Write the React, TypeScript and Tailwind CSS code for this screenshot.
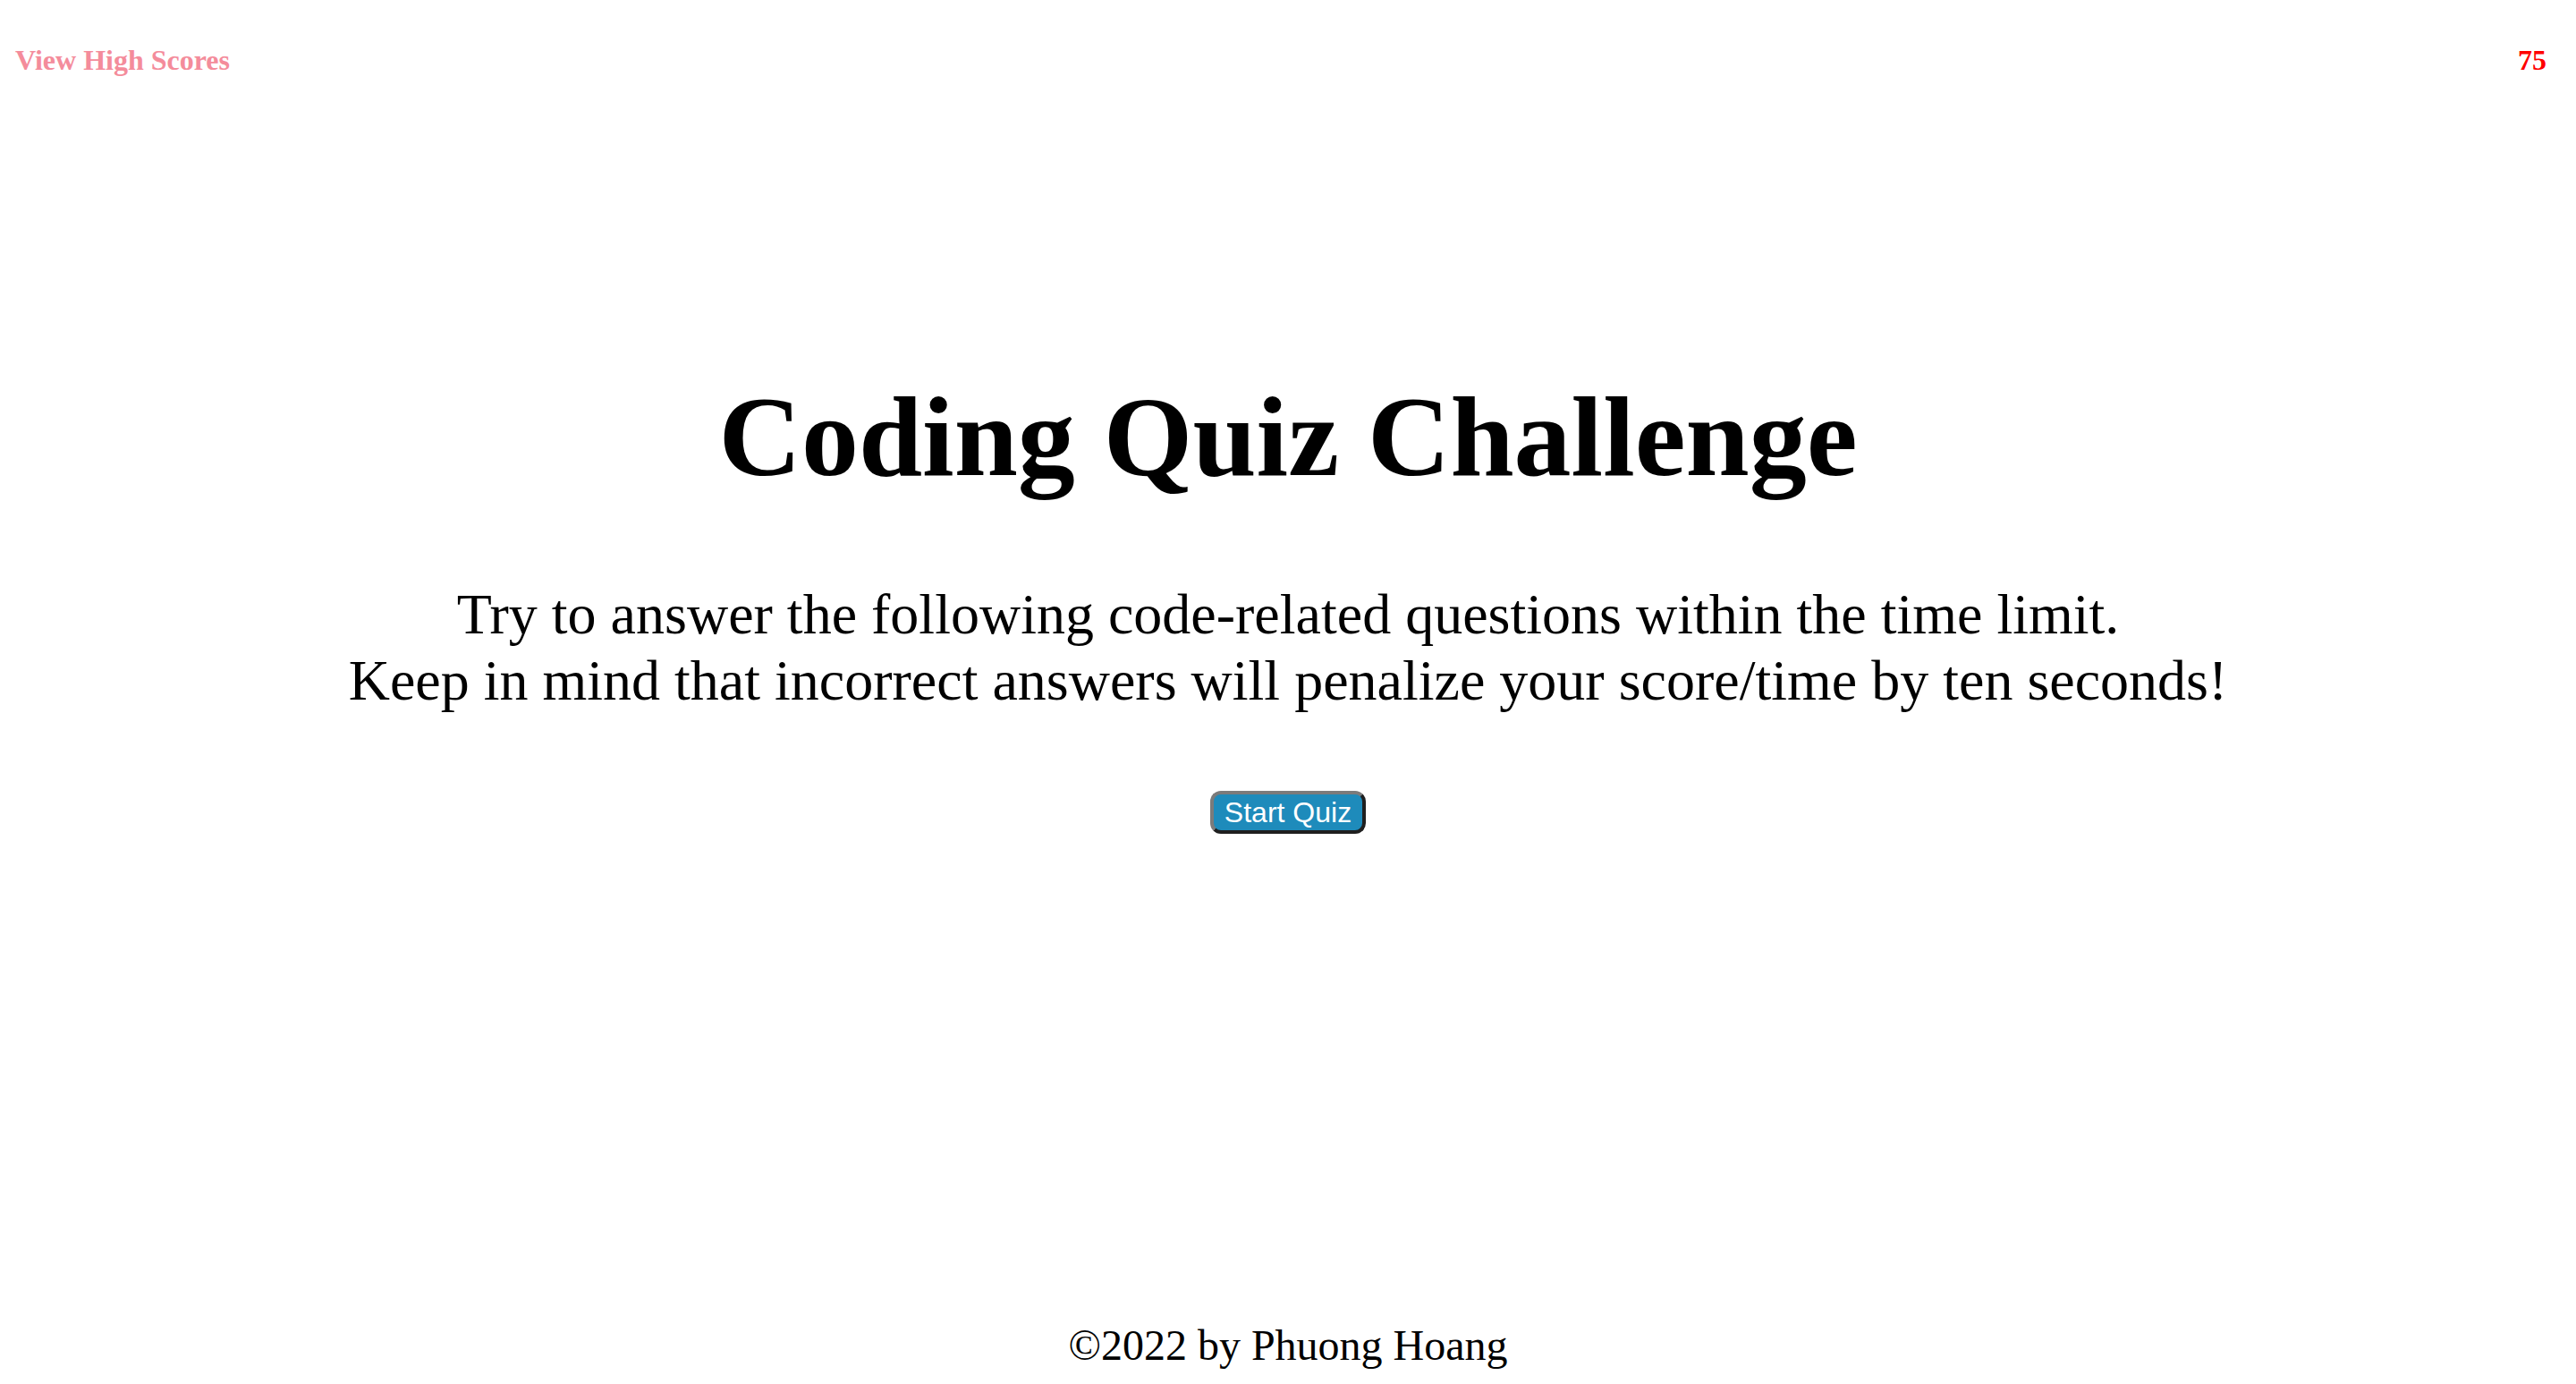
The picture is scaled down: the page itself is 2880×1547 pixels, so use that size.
export default function App() {
  return (
    <div className="min-h-screen flex flex-col bg-white text-black font-['Liberation_Serif','Times_New_Roman',serif]">
      {/* Top bar */}
      <header className="flex items-center justify-between pt-[49px] pl-[17px] pr-[33px]">
        <a className="text-[32px] leading-[1.15] font-bold text-[#f48c9b] cursor-pointer">View High Scores</a>
        <span className="text-[32px] leading-[1.15] font-bold text-[#ff0000]">75</span>
      </header>

      <main className="flex flex-col items-center text-center">
        <h1 className="mt-[329px] text-[128px] leading-[1.15] font-bold">Coding Quiz Challenge</h1>
        <p className="mt-[88px] text-[64px] leading-[1.15]">
          Try to answer the following code-related questions within the time limit.
          <br />
          Keep in mind that incorrect answers will penalize your score/time by ten seconds!
        </p>
        <button className="mt-[87px] h-[48px] w-[174px] flex items-center justify-center rounded-[12px] border-4 border-t-[#7b7b7b] border-l-[#7b7b7b] border-b-[#1f1f1f] border-r-[#1f1f1f] bg-[#1e8bbb] text-white text-[32px] leading-none font-['Liberation_Sans',Arial,sans-serif]">
          Start Quiz
        </button>
      </main>

      <footer className="mt-auto pb-[16px] text-center text-[48px] leading-[1.15]">
        ©2022 by Phuong Hoang
      </footer>
    </div>
  )
}
